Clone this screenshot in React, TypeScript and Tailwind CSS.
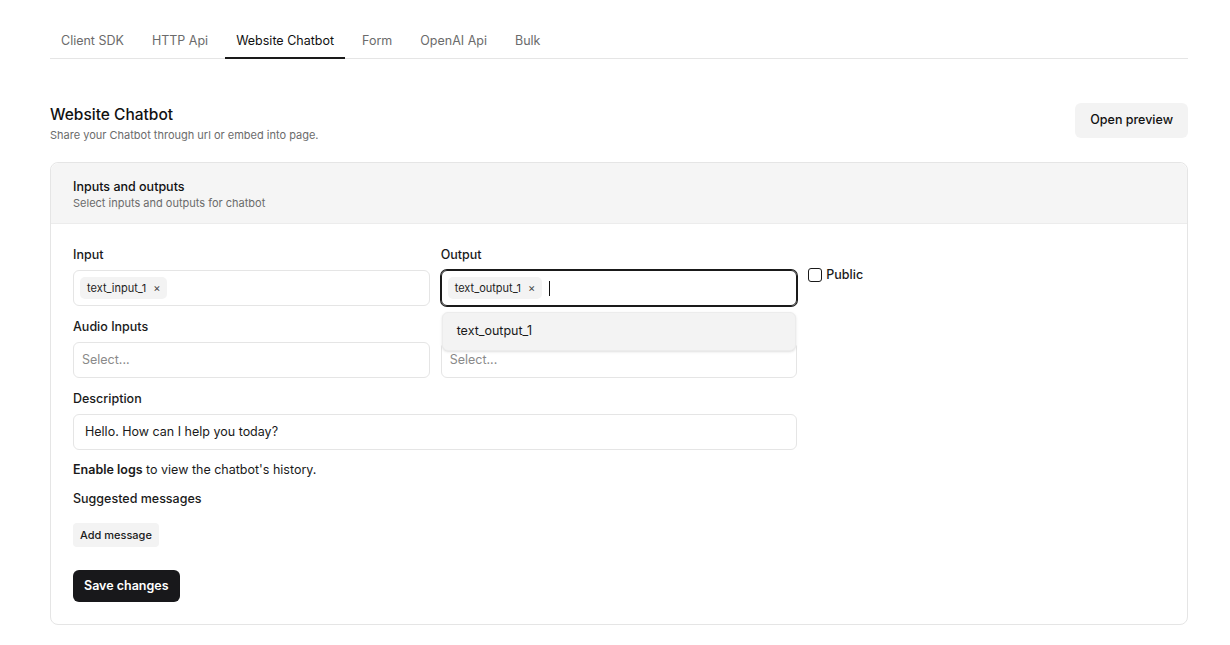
const tabs = ['Client SDK', 'HTTP Api', 'Website Chatbot', 'Form', 'OpenAI Api', 'Bulk'];

function Chip({ label }: { label: string }) {
  return (
    <span className="inline-flex items-center gap-[7px] h-[22px] rounded-[5px] bg-[#f3f3f3] px-[7px] text-[11px] text-[#1f1f1f]">
      {label}
      <span className="text-[11px] text-[#444]">×</span>
    </span>
  );
}

function Field({ label, children }: { label: string; children: React.ReactNode }) {
  return (
    <div className="flex flex-col gap-[5px]">
      <label className="text-[12.5px] leading-5 font-medium text-[#1a1a1a]">{label}</label>
      {children}
    </div>
  );
}

export default function App() {
  return (
    <div className="min-h-screen bg-white pl-[50px] pr-[42px] pt-[23px] pb-5 text-[#1a1a1a]" style={{ fontFamily: 'Inter, "Noto Sans", sans-serif' }}>
      {/* Tabs */}
      <div className="flex gap-[6px] border-b border-[#e5e5e5]">
        {tabs.map((t) => (
          <button
            key={t}
            className={
              t === 'Website Chatbot'
                ? '-mb-px border-b-2 border-[#1a1a1a] px-[11px] pt-[9px] pb-[7px] text-[12.5px] leading-[18px] text-[#111]'
                : '-mb-px border-b-2 border-transparent px-[11px] pt-[9px] pb-[7px] text-[12.5px] leading-[18px] text-[#6b6b6b]'
            }
          >
            {t}
          </button>
        ))}
      </div>

      {/* Header */}
      <div className="mt-[44px] flex items-start justify-between">
        <div>
          <h1 className="text-[15.5px] leading-6 font-medium text-[#111]">Website Chatbot</h1>
          <p className="text-[11px] leading-4 text-[#6b6b6b]">Share your Chatbot through url or embed into page.</p>
        </div>
        <button className="h-[35px] rounded-md bg-[#f3f3f3] px-[15px] text-[12.5px] font-medium text-[#111]">
          Open preview
        </button>
      </div>

      {/* Card */}
      <div className="mt-[19px] rounded-lg border border-[#e5e5e5]">
        <div className="rounded-t-lg border-b border-[#ececec] bg-[#f5f5f5] px-[22px] pt-[15px] pb-[13px]">
          <h2 className="text-[12.5px] leading-[18px] font-medium text-[#111]">Inputs and outputs</h2>
          <p className="text-[11px] leading-[14px] text-[#6b6b6b]">Select inputs and outputs for chatbot</p>
        </div>

        <div className="px-[22px] pt-[21px] pb-[22px]">
          <div className="grid grid-cols-3 gap-x-[11px] gap-y-[11px]">
            <Field label="Input">
              <div className="flex h-9 items-center rounded-md border border-[#e5e5e5] px-[6px]">
                <Chip label="text_input_1" />
              </div>
            </Field>

            <Field label="Output">
              <div className="relative">
                <div className="flex h-9 items-center gap-[7px] rounded-md border border-[#1a1a1a] ring-1 ring-[#1a1a1a] px-[6px]">
                  <Chip label="text_output_1" />
                  <span className="h-[15px] w-px bg-[#111]" />
                </div>
                <div className="absolute left-[1px] right-[1px] top-[42px] z-10 rounded-md border border-[#ececec] bg-[#f3f3f3] shadow-sm">
                  <div className="flex h-[37px] items-center px-[14px] text-[12.5px] text-[#1a1a1a]">text_output_1</div>
                </div>
              </div>
            </Field>

            <div className="flex items-start gap-[4px] pt-[22px]">
              <span className="mt-px h-[14px] w-[14px] rounded-[3px] border border-[#1a1a1a] bg-white" />
              <span className="text-[12.5px] leading-4 font-medium text-[#1a1a1a]">Public</span>
            </div>

            <Field label="Audio Inputs">
              <div className="flex h-9 items-center rounded-md border border-[#e5e5e5] px-2 text-[12.5px] text-[#8a8a8a]">Select...</div>
            </Field>

            <div className="flex flex-col gap-[5px]">
              <div className="h-5" />
              <div className="flex h-9 items-center rounded-md border border-[#e5e5e5] px-2 text-[12.5px] text-[#8a8a8a]">Select...</div>
            </div>

            <div />

            <div className="col-span-2">
              <Field label="Description">
                <div className="flex h-9 items-center rounded-md border border-[#e5e5e5] px-[11px] text-[12.5px] text-[#1a1a1a]">
                  Hello. How can I help you today?
                </div>
              </Field>
            </div>
          </div>

          <p className="mt-[10px] text-[12.5px] leading-5 text-[#1a1a1a]">
            <span className="font-semibold">Enable logs</span> to view the chatbot's history.
          </p>

          <p className="mt-[9px] text-[12.5px] leading-5 font-medium text-[#1a1a1a]">Suggested messages</p>

          <button className="mt-[14px] h-6 rounded-[4px] bg-[#f3f3f3] px-[7px] text-[11px] font-medium text-[#1a1a1a]">
            Add message
          </button>

          <div>
            <button className="mt-[23px] h-8 rounded-md bg-[#18181b] px-[11px] text-[12.5px] font-semibold text-white">
              Save changes
            </button>
          </div>
        </div>
      </div>
    </div>
  );
}
